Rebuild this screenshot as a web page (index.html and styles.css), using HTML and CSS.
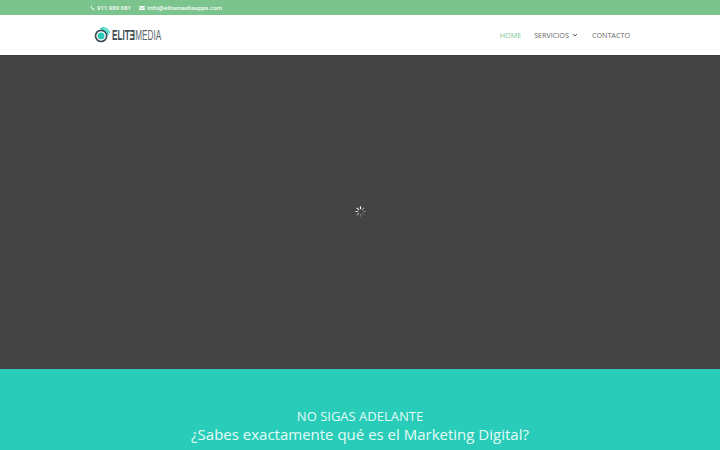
FILE: index.html

```html
<!DOCTYPE html>
<html lang="es">
<head>
    <meta charset="UTF-8">
    <meta name="viewport" content="width=device-width, initial-scale=1.0">
    <title>Elite Media</title>
    <link rel="stylesheet" href="styles.css">
</head>
<body>
    <div class="top-bar">
        <div class="wrap top-info">
            <span class="top-item">
                <svg class="top-icon phone" viewBox="0 0 10 10"><path d="M1.2 1.6 2.8.8l1.300 2.300-1 .9c.5 1.100 1.400 2 2.600 2.700l1-1 2.200 1.500-.9 1.600C5 8.900 1.200 5.300 1.200 1.600z"/></svg>
                911 989 681
            </span>
            <span class="top-item">
                <svg class="top-icon" viewBox="0 0 10 10"><path d="M.5 1.800h9v1L5 5.400.5 2.800zM.5 3.900 5 6.500l4.500-2.600v4.300h-9z"/></svg>
                info@elitemediaapps.com
            </span>
        </div>
    </div>

    <header class="site-header">
        <div class="wrap header-row">
            <a class="logo" href="#">
                <svg class="logo-mark" viewBox="0 0 18 18">
                    <circle cx="8" cy="10" r="6.300" fill="none" stroke="#3b4a50" stroke-width="1.900"/>
                    <circle cx="8" cy="10" r="3.800" fill="#29ccb8"/>
                    <path d="M7 1.900A8.500 8.500 0 0 1 16 9" fill="none" stroke="#29ccb8" stroke-width="1.700"/>
                    <path d="M9 .4A9.500 9.500 0 0 1 17.600 6.500" fill="none" stroke="#29ccb8" stroke-width="1.200"/>
                </svg>
                <span class="logo-text"><b>ELIT</b><b class="flip">E</b><span>MEDIA</span></span>
            </a>
            <nav class="main-nav">
                <a class="active" href="#">HOME</a>
                <a href="#">SERVICIOS <svg class="chevron" viewBox="0 0 8 8"><path d="M2 3 4 5l2-2" fill="none" stroke="#666" stroke-width="1"/></svg></a>
                <a href="#">CONTACTO</a>
            </nav>
        </div>
    </header>

    <section class="hero">
        <svg class="spinner" viewBox="0 0 12 12">
            <g stroke-width="1.300" stroke-linecap="round">
                <path d="M6 .8v2.200" stroke="#fff"/>
                <path d="M9.700 2.300 8.100 3.900" stroke="#999"/>
                <path d="M11.200 6H9" stroke="#777"/>
                <path d="M9.700 9.700 8.100 8.100" stroke="#6a6a6a"/>
                <path d="M6 11.200V9" stroke="#777"/>
                <path d="M2.300 9.700 3.900 8.100" stroke="#999"/>
                <path d="M.8 6H3" stroke="#ccc"/>
                <path d="M2.300 2.300 3.900 3.900" stroke="#eee"/>
            </g>
        </svg>
    </section>

    <section class="promo">
        <h2>NO SIGAS ADELANTE</h2>
        <p>¿Sabes exactamente qué es el Marketing Digital?</p>
    </section>
</body>
</html>
```

FILE: styles.css

```css
* {
    margin: 0;
    padding: 0;
    box-sizing: border-box;
}

html, body {
    height: 450px;
    overflow: hidden;
}

body {
    font-family: "Open Sans", Arial, sans-serif;
    background: #fff;
    color: #666;
}

a {
    color: inherit;
    text-decoration: none;
}

.wrap {
    width: 540px;
    margin: 0 auto;
}

.top-bar {
    height: 15px;
    background: #7cc48d;
}

.top-info {
    display: flex;
    gap: 8px;
    height: 15px;
    align-items: center;
    color: #fff;
    font-size: 6px;
    font-weight: 600;
}

.top-item {
    display: flex;
    align-items: center;
    gap: 2px;
}

.top-icon {
    width: 6px;
    height: 6px;
    fill: #fff;
}

.top-icon.phone {
    width: 5px;
}

.site-header {
    position: relative;
    height: 40px;
    background: #fff;
    box-shadow: 0 1px 0 rgba(0,0,0,0.1);
}

.header-row {
    display: flex;
    justify-content: space-between;
    align-items: center;
    height: 40px;
}

.logo {
    display: flex;
    align-items: center;
    gap: 2px;
    margin-left: 4px;
}

.logo-mark {
    width: 16px;
    height: 16px;
}

.logo-text {
    display: inline-block;
    font-family: "Liberation Sans", Arial, sans-serif;
    font-size: 14px;
    line-height: 14px;
    color: #3b4a50;
    transform: scaleX(0.585);
    transform-origin: left center;
    white-space: nowrap;
}

.logo-text span {
    font-weight: 400;
    color: #59666b;
}

.flip {
    display: inline-block;
    transform: scaleX(-1);
}

.main-nav {
    display: flex;
    gap: 13px;
    font-size: 7.200px;
    color: #666;
}

.main-nav a {
    display: flex;
    align-items: center;
    gap: 2px;
}

.main-nav .active {
    color: #7cc48d;
}

.chevron {
    width: 8px;
    height: 8px;
}

.hero {
    display: flex;
    justify-content: center;
    align-items: center;
    height: 314px;
    padding-bottom: 2px;
    background: #444;
}

.spinner {
    width: 11px;
    height: 11px;
}

.promo {
    height: 81px;
    padding-top: 38px;
    background: #29ccb8;
    color: #e4fbf7;
    text-align: center;
}

.promo h2 {
    font-size: 13px;
    font-weight: 400;
    line-height: 18px;
}

.promo p {
    font-size: 15px;
    line-height: 19px;
}
```
